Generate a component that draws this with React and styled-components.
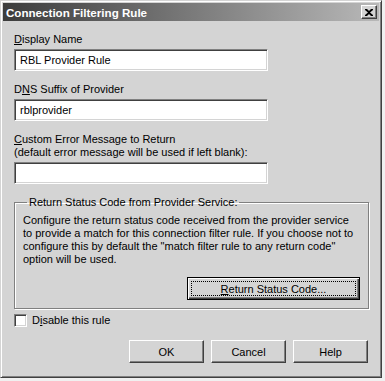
import styled, { createGlobalStyle } from "styled-components";

const GlobalStyle = createGlobalStyle`
  body {
    margin: 0;
    background: #f0f0f0;
    font-family: "Liberation Sans", Arial, sans-serif;
    font-size: 11px;
    color: #000;
  }
`;

const Window = styled.div`
  box-sizing: border-box;
  width: 382px;
  height: 378px;
  background: #d4d4d4;
  border: 1px solid #d4d4d4;
  border-right-color: #404040;
  border-bottom-color: #404040;
  box-shadow: inset 1px 1px 0 #fff, inset -1px -1px 0 #808080;
  padding: 2px;
  display: flex;
  flex-direction: column;
`;

const TitleBar = styled.div`
  height: 18px;
  display: flex;
  align-items: center;
  justify-content: space-between;
  padding: 0 2px 0 3px;
  background: linear-gradient(to right, #3c3c3c, #b8b8b8);
  color: #fff;
  font-weight: bold;
  font-size: 11.6px;
`;

const CloseButton = styled.button`
  box-sizing: border-box;
  width: 16px;
  height: 14px;
  padding: 0;
  background: #d4d4d4;
  border: 1px solid;
  border-color: #fff #404040 #404040 #fff;
  box-shadow: inset -1px -1px 0 #808080;
  display: flex;
  align-items: center;
  justify-content: center;
`;

const Content = styled.div`
  padding: 12px 11px 0 11px;
  display: flex;
  flex-direction: column;
`;

const Label = styled.div`
  line-height: 13px;
`;

const Key = styled.span`
  text-decoration: underline;
`;

const TextBox = styled.div`
  box-sizing: border-box;
  width: 254px;
  height: 22px;
  margin: 3px 0 ${(p) => p.$mb ?? 12}px;
  background: #fff;
  border: 1px solid;
  border-color: #808080 #fff #fff #808080;
  box-shadow: inset 1px 1px 0 #404040, inset -1px -1px 0 #d4d4d4;
  padding: 4px 5px;
  line-height: 13px;
`;

const Group = styled.fieldset`
  box-sizing: border-box;
  width: 355px;
  height: 113px;
  margin: 6px 0 0;
  padding: 2px 8px 0;
  border: 1px solid #808080;
  box-shadow: 1px 1px 0 #fff, inset 1px 1px 0 #fff;
  display: flex;
  flex-direction: column;
  align-items: flex-start;
`;

const Legend = styled.legend`
  padding: 0 2px;
  margin-left: 4px;
  line-height: 13px;
`;

const Para = styled.p`
  margin: 3px 0 0;
  line-height: 13px;
`;

const Button = styled.button`
  box-sizing: border-box;
  width: ${(p) => p.$w || 75}px;
  height: 23px;
  padding: 0;
  font: inherit;
  color: #000;
  background: #d4d4d4;
  border: 1px solid;
  border-color: ${(p) => (p.$default ? "#000" : "#fff #404040 #404040 #fff")};
  box-shadow: ${(p) =>
    p.$default
      ? "inset 1px 1px 0 #fff, inset -1px -1px 0 #404040, inset -2px -2px 0 #808080"
      : "inset -1px -1px 0 #808080"};
  position: relative;
`;

const Focus = styled.span`
  position: absolute;
  inset: 3px;
  border: 1px dotted #000;
`;

const ButtonLine = styled.div`
  display: flex;
  align-self: stretch;
  justify-content: flex-end;
  gap: 7px;
  margin-top: ${(p) => p.$mt || 0}px;
`;

const CheckRow = styled.label`
  display: flex;
  align-items: center;
  gap: 5px;
  margin-top: 5px;
  line-height: 13px;
`;

const CheckBox = styled.span`
  box-sizing: border-box;
  width: 13px;
  height: 13px;
  background: #fff;
  border: 1px solid;
  border-color: #808080 #fff #fff #808080;
  box-shadow: inset 1px 1px 0 #404040, inset -1px -1px 0 #d4d4d4;
`;

export default function App() {
  return (
    <>
      <GlobalStyle />
      <Window>
        <TitleBar>
          <span>Connection Filtering Rule</span>
          <CloseButton aria-label="Close">
            <svg width="8" height="7" viewBox="0 0 8 7">
              <path d="M0 0h2l2 2 2-2h2v1L5 3.5 8 6v1H6L4 5 2 7H0V6l3-2.5L0 1z" fill="#000" />
            </svg>
          </CloseButton>
        </TitleBar>
        <Content>
          <Label>
            <Key>D</Key>isplay Name
          </Label>
          <TextBox>RBL Provider Rule</TextBox>
          <Label>
            D<Key>N</Key>S Suffix of Provider
          </Label>
          <TextBox>rblprovider</TextBox>
          <Label>
            <Key>C</Key>ustom Error Message to Return
            <br />
            (default error message will be used if left blank):
          </Label>
          <TextBox $mb={6} />
          <Group>
            <Legend>Return Status Code from Provider Service:</Legend>
            <Para>
              Configure the return status code received from the provider service
              to provide a match for this connection filter rule. If you choose not to
              configure this by default the "match filter rule to any return code"
              option will be used.
            </Para>
            <ButtonLine $mt={11}>
              <Button $w={173} $default>
                <Focus />
                <Key>R</Key>eturn Status Code...
              </Button>
            </ButtonLine>
          </Group>
          <CheckRow>
            <CheckBox />
            <span>
              D<Key>i</Key>sable this rule
            </span>
          </CheckRow>
          <ButtonLine $mt={13}>
            <Button>OK</Button>
            <Button>Cancel</Button>
            <Button>Help</Button>
          </ButtonLine>
        </Content>
      </Window>
    </>
  );
}
